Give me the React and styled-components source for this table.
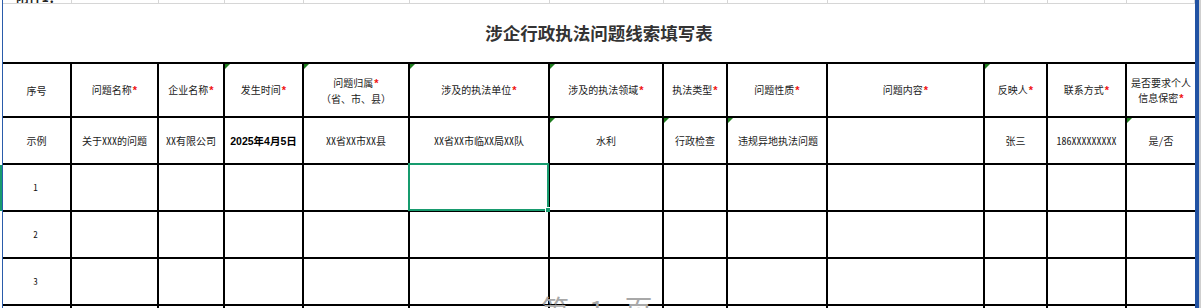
import React from 'react';
import styled, { createGlobalStyle } from 'styled-components';

const COLS = '69px 87px 66px 79px 106px 140px 114px 64px 100px 157px 63px 79px 68px';

const headers = [
  { text: '序号' },
  { text: '问题名称', req: true },
  { text: '企业名称', req: true },
  { text: '发生时间', req: true, note: true },
  { text: '问题归属', req: true, note: true, sub: '（省、市、县）' },
  { text: '涉及的执法单位', req: true, note: true },
  { text: '涉及的执法领域', req: true, note: true },
  { text: '执法类型', req: true },
  { text: '问题性质', req: true },
  { text: '问题内容', req: true },
  { text: '反映人', req: true, note: true },
  { text: '联系方式', req: true },
  { text: '是否要求个人信息保密', req: true },
];

const example = [
  { text: '示例' },
  { text: '关于XXX的问题' },
  { text: 'XX有限公司' },
  { text: '2025年4月5日', bold: true },
  { text: 'XX省XX市XX县' },
  { text: 'XX省XX市临XX局XX队' },
  { text: '水利', note: true },
  { text: '行政检查', note: true },
  { text: '违规异地执法问题', note: true, left: true },
  { text: '' },
  { text: '张三' },
  { text: '186XXXXXXXXX' },
  { text: '是/否', note: true },
];

const App = () => {
  return (
    <>
      <GlobalStyle />
      <Page>
        <Gutter>
          <GutterMark />
        </Gutter>
        <Sheet>
          <TopStrip>
            {COLS.split(' ').map((_, i) => (
              <StripCell key={i}>{i === 0 && <StripLabel>附件1：</StripLabel>}</StripCell>
            ))}
          </TopStrip>
          <TitleRow>涉企行政执法问题线索填写表</TitleRow>
          <Grid>
            {headers.map((h, i) => (
              <Cell key={'h' + i} $note={h.note} $last={i === headers.length - 1}>
                <HeadText>
                  {h.text}
                  {h.req && <Star>*</Star>}
                  {h.sub && <Sub>{h.sub}</Sub>}
                </HeadText>
              </Cell>
            ))}
            {example.map((c, i) => (
              <Cell key={'e' + i} $note={c.note} $left={c.left} $last={i === example.length - 1}>
                <BodyText $bold={c.bold}>{c.text}</BodyText>
              </Cell>
            ))}
            {[1, 2, 3, 4].map((n) =>
              headers.map((_, i) => (
                <Cell key={n + '-' + i} $last={i === headers.length - 1}>
                  {i === 0 && n < 4 && <RowNum>{n}</RowNum>}
                  {n === 1 && i === 5 && (
                    <Selection>
                      <Handle />
                    </Selection>
                  )}
                </Cell>
              ))
            )}
          </Grid>
        </Sheet>
        <RightBar />
        <Watermark>
          <span>第</span>
          <span>1</span>
          <span>页</span>
        </Watermark>
      </Page>
    </>
  );
};

export default App;

const GlobalStyle = createGlobalStyle`
  body {
    margin: 0;
    background: #fff;
    font-family: "Noto Sans Mono CJK SC", "Noto Sans CJK SC", sans-serif;
    color: #1a1a1a;
  }
`;

const Page = styled.div`
  position: relative;
  width: 1201px;
  height: 308px;
  overflow: hidden;
  display: flex;
  background: #fff;
`;

const Gutter = styled.div`
  width: 2px;
  flex-shrink: 0;
  border-right: 1px solid #2a5cab;
  padding-top: 165px;
`;

const GutterMark = styled.div`
  width: 2px;
  height: 46px;
  background: #179b6e;
`;

const Sheet = styled.div`
  width: 1192px;
  flex-shrink: 0;
  display: flex;
  flex-direction: column;
`;

const TopStrip = styled.div`
  display: grid;
  grid-template-columns: ${COLS};
  height: 4px;
  flex-shrink: 0;
  overflow: hidden;
`;

const StripCell = styled.div`
  box-sizing: border-box;
  height: 4px;
  border-right: 1px solid #d6d6d6;
  border-bottom: 1px solid #d6d6d6;
  overflow: hidden;
  padding-left: 13px;
`;

const StripLabel = styled.div`
  font-size: 13px;
  line-height: 13px;
  margin-top: -10px;
  font-weight: bold;
  color: #222;
  white-space: nowrap;
`;

const TitleRow = styled.div`
  box-sizing: border-box;
  height: 60px;
  flex-shrink: 0;
  border-bottom: 2px solid #000;
  display: flex;
  align-items: center;
  justify-content: center;
  padding-bottom: 2px;
  font-family: "Noto Sans CJK SC", sans-serif;
  font-size: 17.5px;
  font-weight: bold;
  color: #333;
`;

const Grid = styled.div`
  display: grid;
  flex-shrink: 0;
  grid-template-columns: ${COLS};
  grid-template-rows: 54px 47px 47px 47px 47px 47px;
`;

const Cell = styled.div`
  position: relative;
  box-sizing: border-box;
  border-right: ${(p) => (p.$last ? 'none' : '2px solid #000')};
  border-bottom: 2px solid #000;
  display: flex;
  align-items: center;
  justify-content: ${(p) => (p.$left ? 'flex-start' : 'center')};
  padding: ${(p) => (p.$left ? '0 0 0 10px' : '0 2px')};
  text-align: center;

  &::before {
    content: '';
    display: ${(p) => (p.$note ? 'block' : 'none')};
    position: absolute;
    top: 0;
    left: 0;
    border-top: 5px solid #1f7d1f;
    border-right: 5px solid transparent;
  }
`;

const HeadText = styled.div`
  font-size: 10px;
  line-height: 15px;
  color: #222;
`;

const Star = styled.span`
  color: #f01010;
  font-family: "Liberation Sans", sans-serif;
  font-weight: bold;
  font-size: 11px;
  margin-left: 1px;
`;

const Sub = styled.div``;

const BodyText = styled.div`
  font-size: ${(p) => (p.$bold ? '10.5px' : '10px')};
  font-weight: ${(p) => (p.$bold ? 'bold' : 'normal')};
  font-family: ${(p) =>
    p.$bold
      ? '"Liberation Sans", "Noto Sans CJK SC", sans-serif'
      : '"Noto Sans Mono CJK SC", "Noto Sans CJK SC", sans-serif'};
  color: ${(p) => (p.$bold ? '#000' : '#222')};
  white-space: nowrap;
`;

const RowNum = styled.div`
  font-size: 9px;
  color: #111;
  margin-left: -2px;
`;

const Selection = styled.div`
  position: absolute;
  top: -2px;
  left: -2px;
  right: -1px;
  bottom: -1px;
  border: 2px solid #179b6e;
`;

const Handle = styled.div`
  position: absolute;
  right: -4px;
  bottom: -4px;
  width: 4px;
  height: 4px;
  background: #179b6e;
  border: 1px solid #fff;
`;

const RightBar = styled.div`
  width: 4px;
  flex-shrink: 0;
  background: #2152a3;
  border-right: 2px solid #cfcfcf;
`;

const Watermark = styled.div`
  position: absolute;
  left: 541px;
  top: 295px;
  display: flex;
  gap: 20px;
  font-family: "Noto Sans CJK SC", sans-serif;
  font-size: 28px;
  line-height: 28px;
  color: #a8a8a8;
  pointer-events: none;
`;
